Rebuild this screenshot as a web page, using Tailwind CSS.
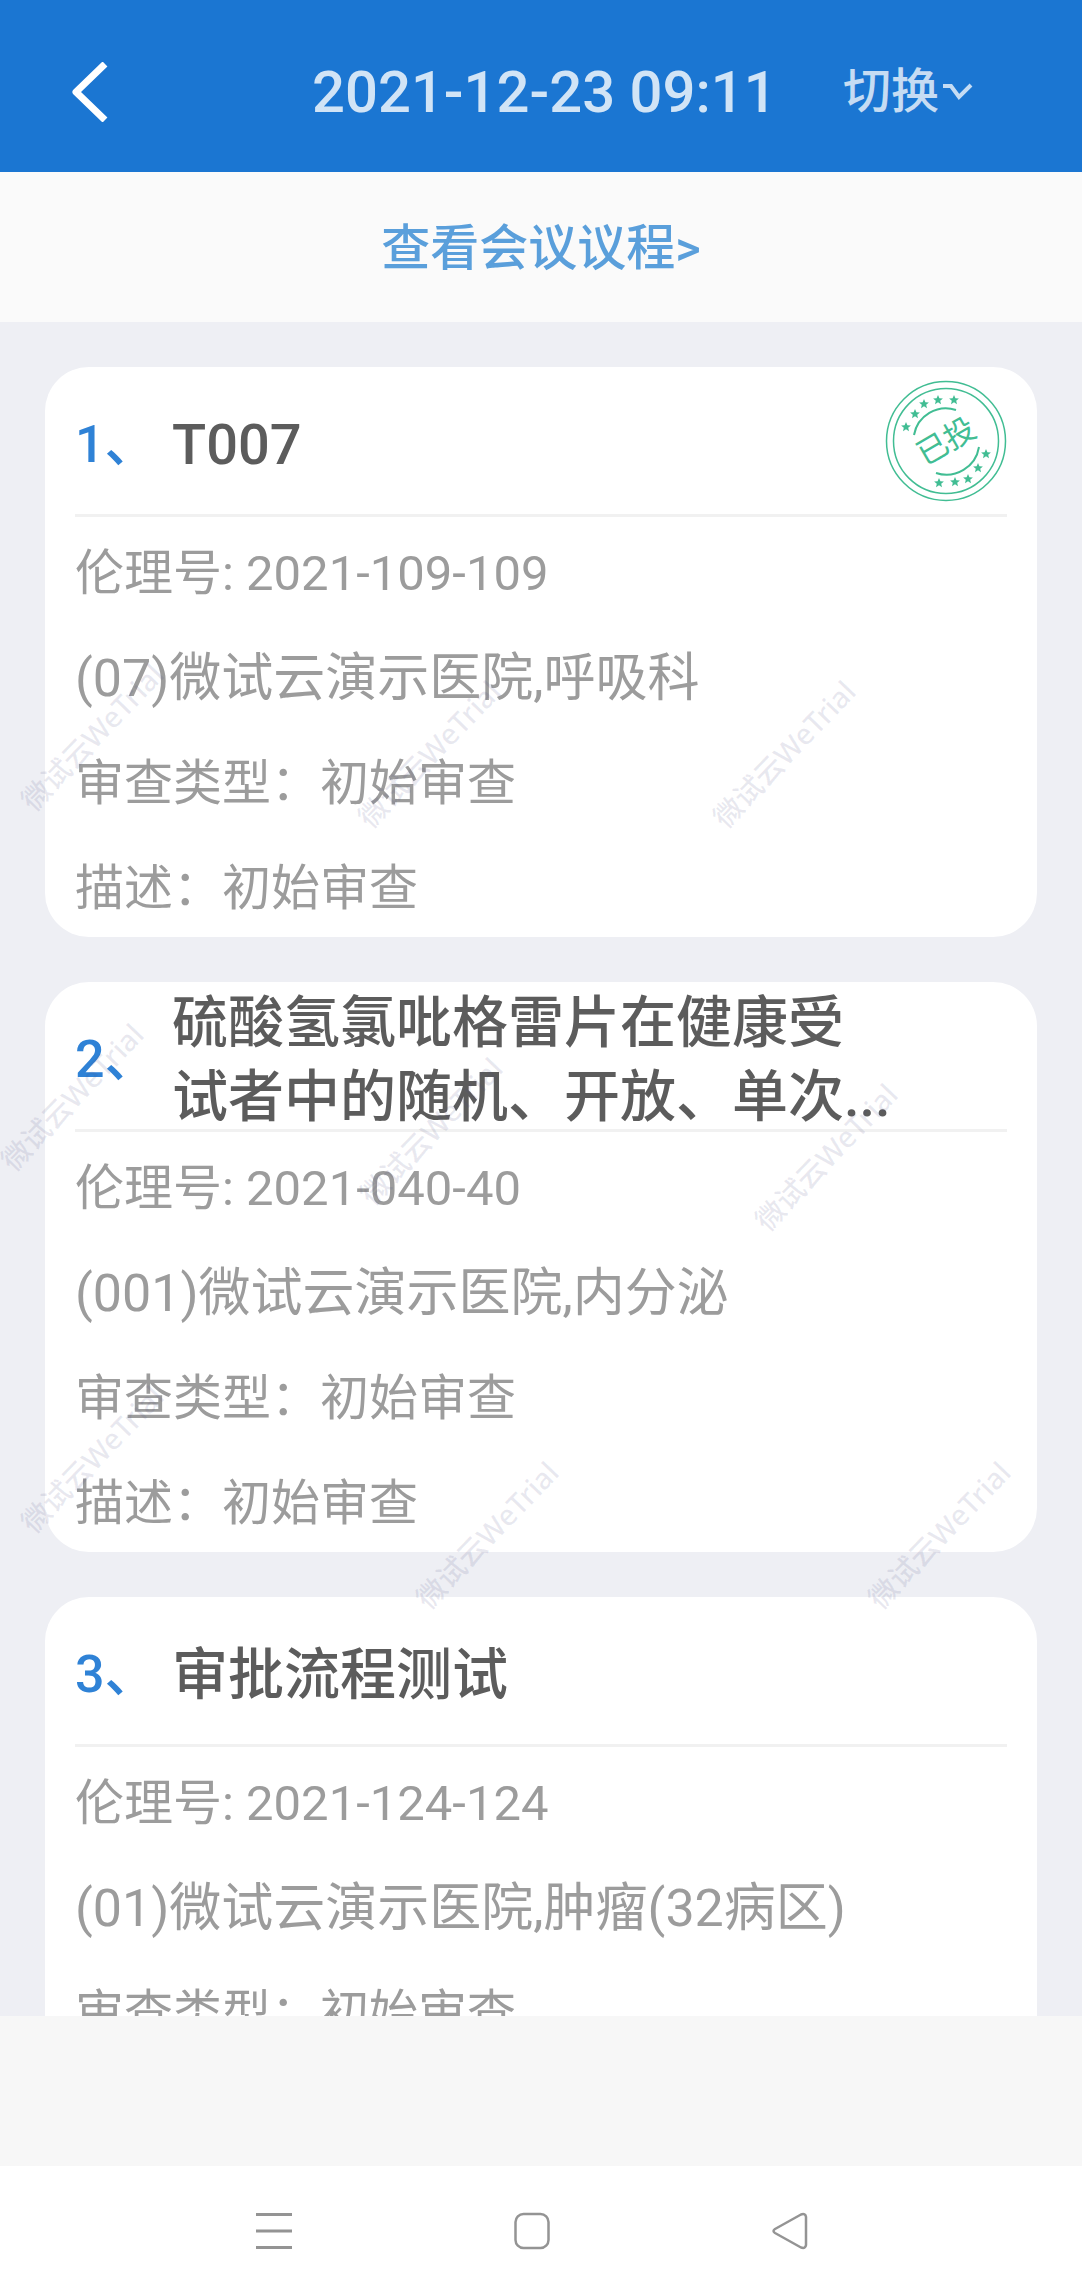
<!DOCTYPE html>
<html lang="zh-CN">
<head>
<meta charset="utf-8">
<meta name="viewport" content="width=device-width, initial-scale=1">
<title>会议审查</title>
<script src="https://cdn.jsdelivr.net/npm/@tailwindcss/browser@4"></script>
</head>
<body class="flex h-screen flex-col overflow-hidden bg-white font-[Roboto,'Noto_Sans_CJK_SC',sans-serif]">
  <header class="grid h-[172px] shrink-0 grid-cols-[312px_1fr_239px] items-center bg-[#1b76d2] pt-3 text-white">
    <button type="button" aria-label="返回" class="ml-[72px] justify-self-start">
      <svg class="h-[60px] w-[36px]" viewBox="0 0 36 60" fill="none" stroke="currentColor" stroke-width="7" stroke-linejoin="round"><path d="M33 2 4 30l29 28"/></svg>
    </button>
    <h1 class="whitespace-nowrap text-[58px] font-medium leading-[72px] text-white/80">2021-12-23 09:11</h1>
    <button type="button" class="flex items-center justify-self-start whitespace-nowrap text-[48px] font-medium leading-[72px] text-white/75">切换
      <svg class="h-[20px] w-[36px]" viewBox="0 0 36 20" fill="none" stroke="currentColor" stroke-width="4"><path d="M4 4h8l8 11 12-12"/></svg>
    </button>
  </header>

  <nav class="flex h-[150px] shrink-0 items-center justify-center bg-[#fafafa] pt-1">
    <a href="#agenda" class="text-[49px] font-medium leading-[72px] text-[#5a9fdb]">查看会议议程&gt;</a>
  </nav>

  <main class="relative min-h-0 flex-1 overflow-hidden bg-[#eeeff4] px-[45px] pt-[45px]">
    <div class="flex flex-col gap-[45px]">
      <article class="rounded-[44px] bg-white px-[30px]">
        <div class="flex h-[150px] items-center border-b-3 border-[#f1f1f1]">
          <span class="w-[97px] shrink-0 pt-2 text-[52px] font-medium leading-[74px] text-[#2f82d6]">1、</span>
          <h2 class="flex-1 pt-2 text-[56px] font-medium leading-[74px] text-[#5c5c5c]">T007</h2>
          <svg class="h-[122px] w-[122px] shrink-0" viewBox="-61 -61 122 122" fill="none" stroke="#41bd93" role="img" aria-label="已投">
            <defs><path id="star" stroke="none" fill="#41bd93" d="M0-5 1.4-1.7 4.9-1.5 2.2.8 3 4.2 0 2.3-3 4.2-2.2.8-4.9-1.5-1.4-1.7z"/></defs>
            <circle r="59.5" stroke-width="1.5"/><circle r="52.5" stroke-width="1.5"/>
            <path stroke-width="2" d="M-32-6A32.5 32.5 0 0 1 10-31M33 6A33 33 0 0 1-10 32"/>
            <use href="#star" x="-40" y="-14"/><use href="#star" x="-31" y="-27"/><use href="#star" x="-22" y="-37"/><use href="#star" x="-8" y="-41"/><use href="#star" x="8" y="-41"/>
            <use href="#star" x="40" y="13"/><use href="#star" x="32" y="27"/><use href="#star" x="22" y="38"/><use href="#star" x="9" y="41"/><use href="#star" x="-7" y="42"/>
            <text transform="rotate(-30)" y="11" text-anchor="middle" stroke="none" fill="#41bd93" class="font-['Noto_Sans_CJK_SC',sans-serif] text-[31px]">已投</text>
          </svg>
        </div>
        <div class="whitespace-nowrap pt-1 text-[49px] leading-[105px] text-[#9c9c9c]">
          <p class="h-[105px]">伦理号: 2021-109-109</p>
          <p class="h-[105px] text-[52px]">(07)微试云演示医院,呼吸科</p>
          <p class="h-[105px]">审查类型：初始审查</p>
          <p class="h-[101px]">描述：初始审查</p>
        </div>
      </article>

      <article class="rounded-[44px] bg-white px-[30px]">
        <div class="flex h-[150px] items-center border-b-3 border-[#f1f1f1]">
          <span class="w-[97px] shrink-0 pt-2 text-[52px] font-medium leading-[74px] text-[#2f82d6]">2、</span>
          <h2 class="w-[724px] pt-2 text-[56px] font-medium leading-[74px] text-[#5c5c5c]">硫酸氢氯吡格雷片在健康受试者中的随机、开放、单次<wbr>...</h2>
        </div>
        <div class="whitespace-nowrap pt-1 text-[49px] leading-[105px] text-[#9c9c9c]">
          <p class="h-[105px]">伦理号: 2021-040-40</p>
          <p class="h-[105px] text-[52px]">(001)微试云演示医院,内分泌</p>
          <p class="h-[105px]">审查类型：初始审查</p>
          <p class="h-[101px]">描述：初始审查</p>
        </div>
      </article>

      <article class="rounded-[44px] bg-white px-[30px]">
        <div class="flex h-[150px] items-center border-b-3 border-[#f1f1f1]">
          <span class="w-[97px] shrink-0 pt-2 text-[52px] font-medium leading-[74px] text-[#2f82d6]">3、</span>
          <h2 class="flex-1 pt-2 text-[56px] font-medium leading-[74px] text-[#5c5c5c]">审批流程测试</h2>
        </div>
        <div class="whitespace-nowrap pt-1 text-[49px] leading-[105px] text-[#9c9c9c]">
          <p class="h-[105px]">伦理号: 2021-124-124</p>
          <p class="h-[105px] text-[52px]">(01)微试云演示医院,肿瘤(32病区)</p>
          <p class="h-[105px]">审查类型：初始审查</p>
          <p class="h-[101px]">描述：初始审查</p>
        </div>
      </article>
    </div>

    <!-- Watermark layer -->
    <div aria-hidden="true" class="pointer-events-none absolute inset-0 font-['Noto_Sans','Noto_Sans_CJK_SC',sans-serif] text-[29px] font-medium leading-[28px] whitespace-nowrap text-[#4a4a80]/12">
      <span class="absolute left-[92px] top-[415px] -translate-1/2 -rotate-46">微试云WeTrial</span>
      <span class="absolute left-[429px] top-[432px] -translate-1/2 -rotate-46">微试云WeTrial</span>
      <span class="absolute left-[784px] top-[432px] -translate-1/2 -rotate-46">微试云WeTrial</span>
      <span class="absolute left-[72px] top-[775px] -translate-1/2 -rotate-46">微试云WeTrial</span>
      <span class="absolute left-[431px] top-[809px] -translate-1/2 -rotate-46">微试云WeTrial</span>
      <span class="absolute left-[826px] top-[835px] -translate-1/2 -rotate-46">微试云WeTrial</span>
      <span class="absolute left-[92px] top-[1137px] -translate-1/2 -rotate-46">微试云WeTrial</span>
      <span class="absolute left-[487px] top-[1213px] -translate-1/2 -rotate-46">微试云WeTrial</span>
      <span class="absolute left-[939px] top-[1213px] -translate-1/2 -rotate-46">微试云WeTrial</span>
    </div>
  </main>

  <div class="h-[150px] shrink-0 bg-[#f7f7f7]"></div>

  <footer class="flex h-[106px] shrink-0 items-center justify-center gap-[222px] bg-white pt-6 pr-[19px] text-[#949494]">
    <button type="button" aria-label="最近任务"><svg class="h-[38px] w-[36px]" viewBox="0 0 36 38" stroke="currentColor" stroke-width="3"><path d="M0 2.500h36M0 19h36M0 35.500h36"/></svg></button>
    <button type="button" aria-label="主屏幕"><svg class="h-[38px] w-[36px]" viewBox="0 0 36 38" fill="none" stroke="currentColor" stroke-width="2.500"><rect x="1.500" y="2" width="33" height="34" rx="8"/></svg></button>
    <button type="button" aria-label="返回上一页"><svg class="h-[38px] w-[36px]" viewBox="0 0 36 38" fill="none" stroke="currentColor" stroke-width="2.500" stroke-linejoin="round"><path d="M3 17 29 2.500Q33.500 1 34 5v28q-.5 4-5 2.500L3 21q-3-2 0-4z"/></svg></button>
  </footer>
</body>
</html>
